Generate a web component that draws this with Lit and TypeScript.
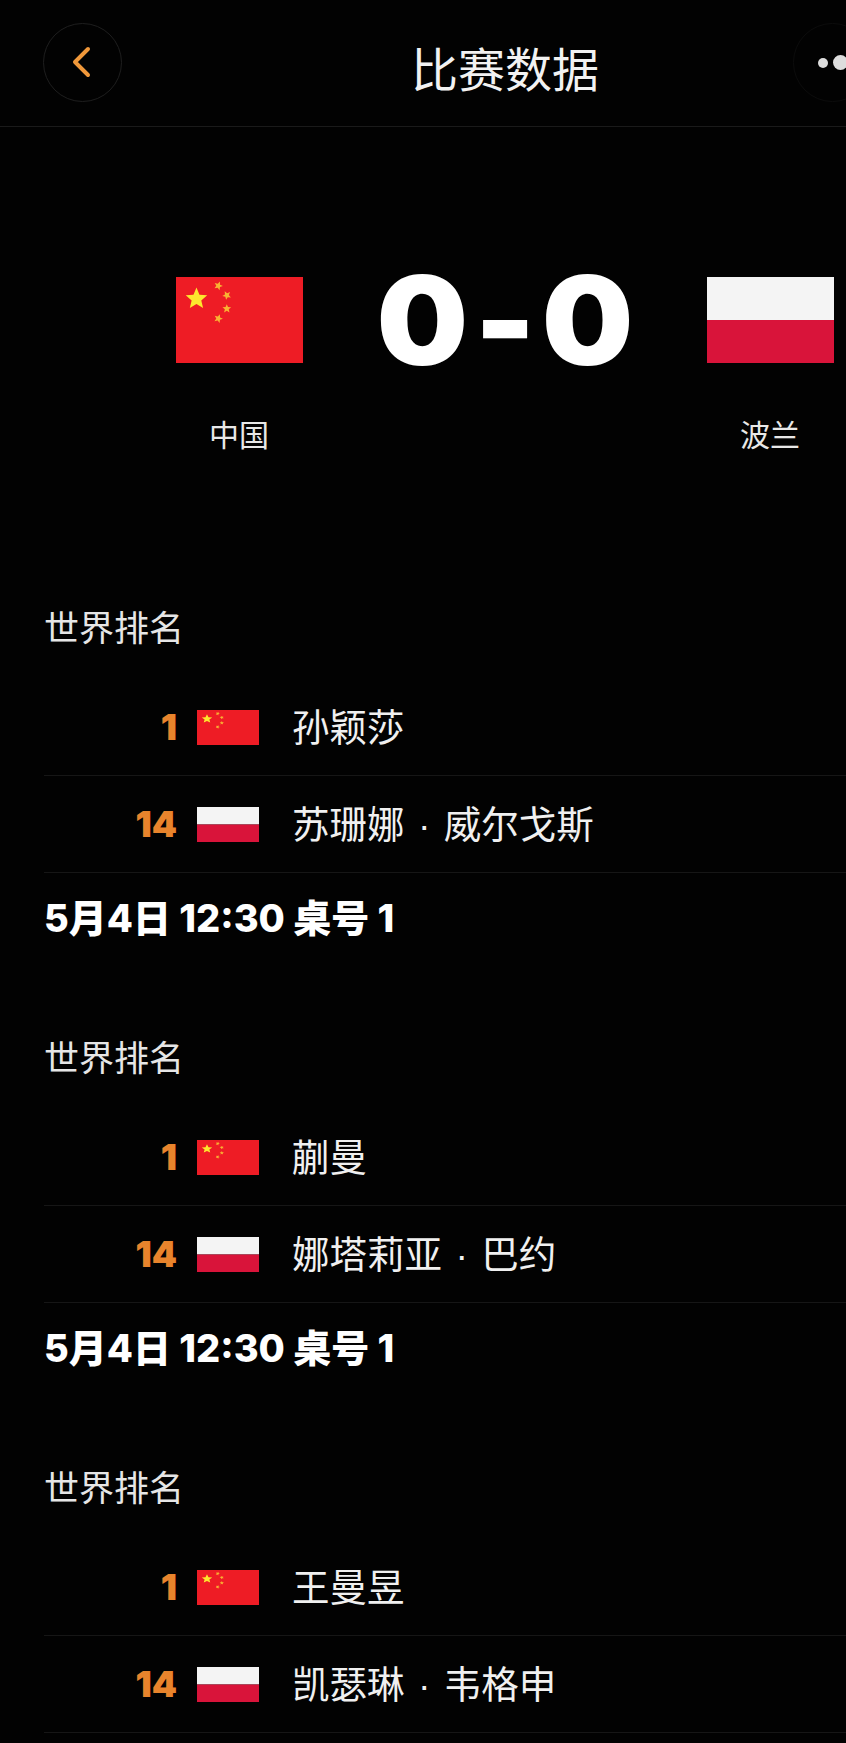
import { LitElement, html, css, svg } from 'lit';
import { customElement } from 'lit/decorators.js';

const CN_STARS = [
  { x: 29, y: 31, r: 16, rot: 0, fill: '#fde72e' },
  { x: 60, y: 12.5, r: 6.5, rot: 20, fill: '#f9b233' },
  { x: 72, y: 26, r: 6.5, rot: 45, fill: '#f9b233' },
  { x: 72, y: 45, r: 6.5, rot: 0, fill: '#f9b233' },
  { x: 60, y: 59, r: 6.5, rot: 20, fill: '#f9b233' },
];

function star(cx: number, cy: number, r: number, rot: number, fill: string) {
  const pts: string[] = [];
  for (let i = 0; i < 10; i++) {
    const rad = i % 2 ? r * 0.45 : r;
    const a = ((-90 + rot + i * 36) * Math.PI) / 180;
    pts.push(`${(cx + rad * Math.cos(a)).toFixed(2)},${(cy + rad * Math.sin(a)).toFixed(2)}`);
  }
  return svg`<polygon points=${pts.join(' ')} fill=${fill}></polygon>`;
}

const flagChina = html`<svg class="flag" viewBox="0 0 180 122" preserveAspectRatio="none">
  <rect width="180" height="122" fill="#ee1c25"></rect>
  ${CN_STARS.map((s) => star(s.x, s.y, s.r, s.rot, s.fill))}
</svg>`;

const flagPoland = html`<svg class="flag" viewBox="0 0 180 122" preserveAspectRatio="none">
  <rect width="180" height="61" fill="#f4f4f4"></rect>
  <rect y="61" width="180" height="61" fill="#d9143a"></rect>
</svg>`;

const MATCHES = [
  { home: '孙颖莎', away: '苏珊娜 · 威尔戈斯', time: '5月4日 12:30 桌号 1' },
  { home: '蒯曼', away: '娜塔莉亚 · 巴约', time: '5月4日 12:30 桌号 1' },
  { home: '王曼昱', away: '凯瑟琳 · 韦格申', time: '' },
];

@customElement('app-root')
export class AppRoot extends LitElement {
  static styles = css`
    :host {
      display: block;
      width: 846px;
      height: 1743px;
      overflow: hidden;
      background: #020202;
      color: #fff;
      font-family: 'Liberation Sans', 'Noto Sans CJK SC', sans-serif;
    }
    .page {
      width: 1010px;
    }
    .nav {
      height: 127px;
      box-sizing: border-box;
      border-bottom: 1px solid #1a1a1a;
      display: flex;
      align-items: center;
      justify-content: space-between;
      padding: 0 0 0 43px;
      position: relative;
    }
    .circle {
      width: 79px;
      height: 79px;
      box-sizing: border-box;
      border: 1.5px solid #1e1e1e;
      border-radius: 50%;
      display: flex;
      align-items: center;
      justify-content: center;
      margin-top: -1px;
    }
    .back svg {
      width: 24px;
      height: 36px;
      margin-right: 4px;
      margin-top: -2px;
    }
    .more {
      border-color: #0c0c0c;
      gap: 5px;
      margin-right: 138px;
    }
    .more i {
      display: block;
      border-radius: 50%;
      background: #ddd;
    }
    .more i:nth-child(1) {
      width: 10px;
      height: 10px;
    }
    .more i:nth-child(2) {
      width: 15px;
      height: 15px;
    }
    .title {
      position: absolute;
      left: 0;
      right: 0;
      text-align: center;
      font-size: 47px;
      font-weight: 400;
      color: #f2f2f2;
      top: 45px;
      line-height: 52px;
    }
    .hero {
      display: flex;
      justify-content: center;
      align-items: flex-start;
      gap: 60px;
      padding: 150px 1px 0 0;
    }
    .team {
      width: 127px;
      display: flex;
      flex-direction: column;
      align-items: center;
    }
    .team .flag {
      width: 127px;
      height: 86px;
      display: block;
    }
    .team span {
      font-size: 30px;
      line-height: 36px;
      margin-top: 55px;
      color: #e8e8e8;
    }
    .score {
      font-family: Inter, sans-serif;
      font-weight: 900;
      font-size: 124px;
      letter-spacing: 6px;
      text-indent: 6px;
      line-height: 86px;
      width: 284px;
      text-align: center;
      white-space: nowrap;
      transform: scaleX(1.04);
    }
    .matches {
      padding: 153px 0 0 44px;
      display: flex;
      flex-direction: column;
    }
    .match {
      height: 430px;
    }
    .label {
      font-size: 35px;
      line-height: 44px;
      color: #e6e6e6;
      margin-bottom: 28px;
    }
    .row {
      height: 97px;
      box-sizing: border-box;
      border-bottom: 1px solid #161616;
      display: flex;
      align-items: center;
    }
    .rank {
      width: 133px;
      text-align: right;
      font-family: Inter, sans-serif;
      font-weight: 900;
      font-size: 36px;
      color: #e8842c;
      flex: none;
    }
    .row .flag {
      width: 62px;
      height: 35px;
      margin-left: 20px;
      margin-right: 33px;
      flex: none;
    }
    .name {
      font-size: 37.5px;
      word-spacing: 3px;
      color: #f0f0f0;
      white-space: nowrap;
      padding-bottom: 5px;
    }
    .time {
      font-family: Inter, 'Noto Sans CJK SC', sans-serif;
      font-size: 38px;
      font-weight: 800;
      line-height: 44px;
      margin-top: 23px;
      white-space: nowrap;
    }
  `;

  render() {
    return html`
      <div class="page">
        <header class="nav">
          <div class="circle back">
            <svg viewBox="0 0 24 36" fill="none" stroke="#f0983a" stroke-width="4" stroke-linecap="round" stroke-linejoin="round">
              <path d="M19 5 L6 18 L19 31"></path>
            </svg>
          </div>
          <div class="title">比赛数据</div>
          <div class="circle more"><i></i><i></i></div>
        </header>
        <section class="hero">
          <div class="team">${flagChina}<span>中国</span></div>
          <div class="score">0-0</div>
          <div class="team">${flagPoland}<span>波兰</span></div>
        </section>
        <div class="matches">
          ${MATCHES.map(
            (m) => html`
              <div class="match">
                <div class="label">世界排名</div>
                <div class="row">
                  <span class="rank">1</span>${flagChina}<span class="name">${m.home}</span>
                </div>
                <div class="row">
                  <span class="rank">14</span>${flagPoland}<span class="name">${m.away}</span>
                </div>
                ${m.time ? html`<div class="time">${m.time}</div>` : ''}
              </div>
            `
          )}
        </div>
      </div>
    `;
  }
}
